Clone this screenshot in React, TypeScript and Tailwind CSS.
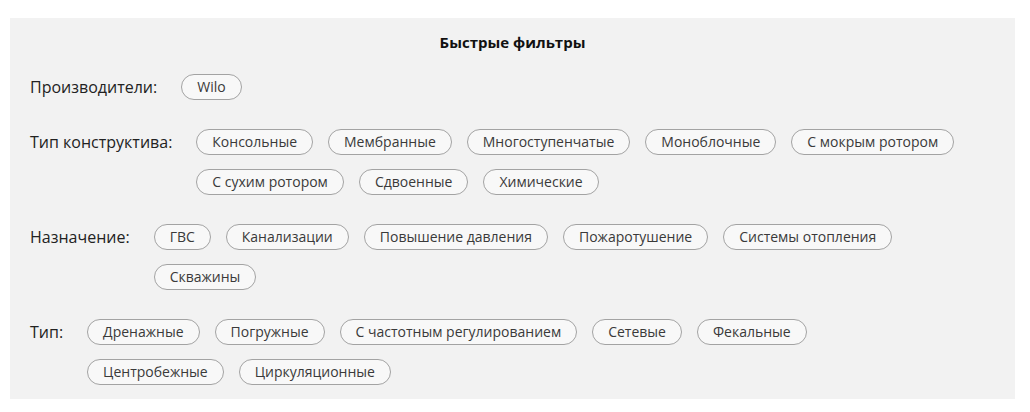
import React from 'react';

// Quick filter groups shown in the panel
const groups: { label: string; items: string[] }[] = [
  { label: 'Производители:', items: ['Wilo'] },
  {
    label: 'Тип конструктива:',
    items: [
      'Консольные',
      'Мембранные',
      'Многоступенчатые',
      'Моноблочные',
      'С мокрым ротором',
      'С сухим ротором',
      'Сдвоенные',
      'Химические',
    ],
  },
  {
    label: 'Назначение:',
    items: ['ГВС', 'Канализации', 'Повышение давления', 'Пожаротушение', 'Системы отопления', 'Скважины'],
  },
  {
    label: 'Тип:',
    items: [
      'Дренажные',
      'Погружные',
      'С частотным регулированием',
      'Сетевые',
      'Фекальные',
      'Центробежные',
      'Циркуляционные',
    ],
  },
];

const Chip = ({ text }: { text: string }) => (
  <button className="h-[26px] mr-[15px] px-[15px] rounded-full border border-[#a3a3a3] bg-[#f8f8f8] text-[14px] leading-[24px] text-[#3a3a3a] whitespace-nowrap">
    {text}
  </button>
);

const App = () => {
  return (
    <div className="min-h-screen bg-white pt-[18px] pl-[10px] font-['Open_Sans',sans-serif]">
      <div className="w-[1005px] h-[381px] bg-[#f2f2f2] px-[20px] pt-[14px]">
        <h2 className="text-center text-[15px] leading-[20px] font-bold text-[#111]">Быстрые фильтры</h2>

        <div className="mt-[22px] pr-[25px] flex flex-col gap-[29px]">
          {groups.map((g) => (
            <div key={g.label} className="flex items-start">
              <span className="shrink-0 mr-[24px] text-[16px] leading-[26px] text-[#222]">{g.label}</span>
              <div className="flex-1 flex flex-wrap gap-y-[14px]">
                {g.items.map((item) => (
                  <Chip key={item} text={item} />
                ))}
              </div>
            </div>
          ))}
        </div>
      </div>
    </div>
  );
};

export default App;
